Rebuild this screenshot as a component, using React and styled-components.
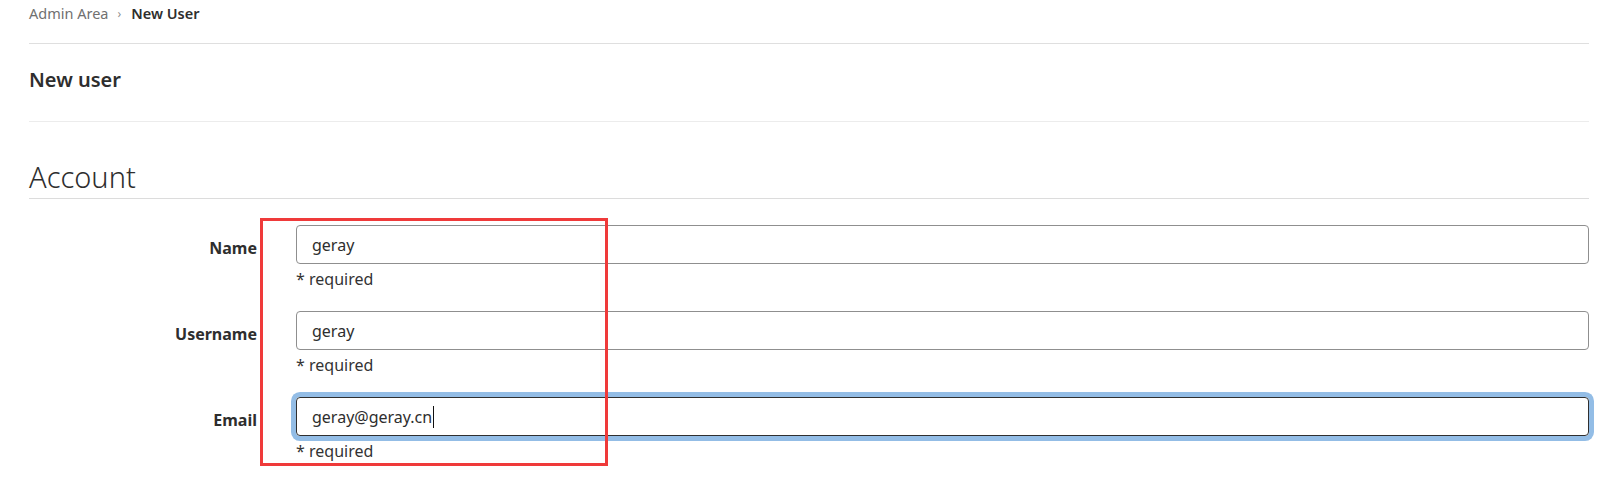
import React from "react";
import styled, { createGlobalStyle } from "styled-components";

const GlobalStyle = createGlobalStyle`
  html, body {
    margin: 0;
    padding: 0;
    background: #fff;
  }
  body {
    font-family: "Noto Sans", "Open Sans", sans-serif;
    color: #2e2e2e;
  }
`;

const Page = styled.div`
  position: relative;
  padding: 0 10px 0 29px;
  height: 477px;
  overflow: hidden;
`;

const Breadcrumbs = styled.nav`
  display: flex;
  align-items: center;
  height: 26px;
  padding-bottom: 17px;
  border-bottom: 1px solid #dfdfdf;
  font-size: 14.5px;
`;

const Crumb = styled.span`
  color: ${(p) => (p.current ? "#2e2e2e" : "#707070")};
  font-weight: ${(p) => (p.current ? 600 : 400)};
`;

const Chevron = styled.span`
  margin: 0 10px 0 9px;
  color: #909090;
  font-size: 12px;
`;

const TitleBar = styled.div`
  box-sizing: border-box;
  display: flex;
  align-items: center;
  height: 78px;
  padding-bottom: 7px;
  border-bottom: 1px solid #ececec;
`;

const Title = styled.h3`
  margin: 0;
  font-size: 20px;
  font-weight: 600;
  color: #2e2e2e;
`;

const SectionTitle = styled.h4`
  margin: 0;
  padding-top: 35px;
  height: 41px;
  line-height: 39px;
  font-size: 29px;
  font-weight: 300;
  color: #2e2e2e;
  border-bottom: 1px solid #dcdcdc;
`;

const Form = styled.div`
  padding-top: 26px;
  display: flex;
  flex-direction: column;
  gap: 21px;
`;

const Row = styled.div`
  display: grid;
  grid-template-columns: 228px 1fr;
  column-gap: 39px;
`;

const Label = styled.label`
  padding-top: 3px;
  text-align: right;
  font-size: 16px;
  font-weight: 700;
  color: #2e2e2e;
  line-height: 40px;
`;

const Field = styled.div`
  display: flex;
  flex-direction: column;
`;

const FieldBox = styled.div`
  box-sizing: border-box;
  height: 39px;
  display: flex;
  align-items: center;
  padding: 0 15px;
  border: 1px solid ${(p) => (p.focused ? "#2f2f2f" : "#8f8f8f")};
  border-radius: 4px;
  font-size: 16px;
  color: #2e2e2e;
  box-shadow: ${(p) => (p.focused ? "0 0 0 5px #93bde6" : "none")};
`;

const Caret = styled.span`
  display: inline-block;
  width: 1px;
  height: 22px;
  background: #111;
  margin-left: 1px;
`;

const Help = styled.div`
  margin-top: 5px;
  font-size: 16px;
  line-height: 21px;
  color: #333;
`;

const Annotation = styled.div`
  position: absolute;
  left: 260px;
  top: 218px;
  width: 342px;
  height: 242px;
  border: 3px solid #ef3a3a;
  pointer-events: none;
`;

const fields = [
  { label: "Name", value: "geray" },
  { label: "Username", value: "geray" },
  { label: "Email", value: "geray@geray.cn", focused: true },
];

export default function App() {
  return (
    <>
      <GlobalStyle />
      <Page>
        <Breadcrumbs>
          <Crumb>Admin Area</Crumb>
          <Chevron>›</Chevron>
          <Crumb current>New User</Crumb>
        </Breadcrumbs>
        <TitleBar>
          <Title>New user</Title>
        </TitleBar>
        <SectionTitle>Account</SectionTitle>
        <Form>
          {fields.map((f) => (
            <Row key={f.label}>
              <Label>{f.label}</Label>
              <Field>
                <FieldBox focused={f.focused}>
                  {f.value}
                  {f.focused && <Caret />}
                </FieldBox>
                <Help>* required</Help>
              </Field>
            </Row>
          ))}
        </Form>
        <Annotation />
      </Page>
    </>
  );
}
